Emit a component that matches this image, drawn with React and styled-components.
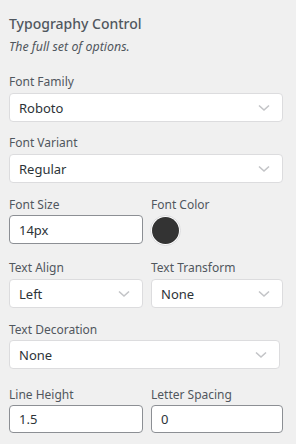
import React from 'react'
import styled, { createGlobalStyle } from 'styled-components'

const GlobalStyle = createGlobalStyle`
  html, body {
    margin: 0;
    padding: 0;
    background: #f0f0f0;
  }
  body {
    font-family: 'Noto Sans', 'Open Sans', sans-serif;
    color: #3c434a;
  }
`

const Panel = styled.div`
  width: 296px;
  height: 444px;
  box-sizing: border-box;
  padding: 13px 13px 0 9px;
  display: flex;
  flex-direction: column;
`

const Title = styled.h2`
  margin: 0;
  font-size: 14px;
  line-height: 21px;
  font-weight: 500;
  color: #50575e;
`

const Description = styled.p`
  margin: 4px 0 18px;
  font-size: 12.4px;
  line-height: 18px;
  font-style: italic;
  color: #50575e;
`

const Row = styled.div`
  display: grid;
  grid-template-columns: ${p => (p.split ? '134px 132px' : '1fr')};
  column-gap: 8px;
  margin-bottom: ${p => p.gap || 13}px;
`

const Field = styled.div`
  display: flex;
  flex-direction: column;
  min-width: 0;
`

const Label = styled.label`
  font-size: 12px;
  line-height: 16px;
  color: #50575e;
  margin-bottom: ${p => p.tight ? 2 : 3}px;
`

const SelectBox = styled.div`
  box-sizing: border-box;
  height: 29px;
  width: ${p => p.width ? `${p.width}px` : '100%'};
  background: #fff;
  border: 1px solid #dcdcde;
  border-radius: 4px;
  display: flex;
  align-items: center;
  justify-content: space-between;
  padding: 0 12px 0 9px;
  font-size: 13px;
  color: #2c3338;
`

const Input = styled.div`
  box-sizing: border-box;
  height: ${p => p.h || 29}px;
  background: #fff;
  border: 1px solid #8c8f94;
  border-radius: 4px;
  display: flex;
  align-items: center;
  padding: 0 9px;
  font-size: 13px;
  color: #2c3338;
`

const Swatch = styled.div`
  box-sizing: border-box;
  width: 31px;
  height: 31px;
  margin-left: -1px;
  border-radius: 50%;
  border: 1px solid #dcdcde;
  background: #fff;
  display: flex;
  align-items: center;
  justify-content: center;
  &::after {
    content: '';
    width: 27px;
    height: 27px;
    border-radius: 50%;
    background: ${p => p.color};
  }
`

const Chevron = () => (
  <svg width="12" height="8" viewBox="0 0 12 8" fill="none">
    <path d="M1 1.5 L6 6 L11 1.5" stroke="#c3c4c7" strokeWidth="1.6" />
  </svg>
)

const Select = ({ value, width }) => (
  <SelectBox width={width}>
    <span>{value}</span>
    <Chevron />
  </SelectBox>
)

const App = () => (
  <>
    <GlobalStyle />
    <Panel>
      <Title>Typography Control</Title>
      <Description>The full set of options.</Description>

      <Row>
        <Field>
          <Label>Font Family</Label>
          <Select value="Roboto" />
        </Field>
      </Row>

      <Row gap={14}>
        <Field>
          <Label>Font Variant</Label>
          <Select value="Regular" />
        </Field>
      </Row>

      <Row split gap={14}>
        <Field>
          <Label tight>Font Size</Label>
          <Input>14px</Input>
        </Field>
        <Field>
          <Label tight>Font Color</Label>
          <Swatch color="#333333" />
        </Field>
      </Row>

      <Row split gap={14}>
        <Field>
          <Label>Text Align</Label>
          <Select value="Left" />
        </Field>
        <Field>
          <Label>Text Transform</Label>
          <Select value="None" />
        </Field>
      </Row>

      <Row gap={18}>
        <Field>
          <Label tight>Text Decoration</Label>
          <Select value="None" width={271} />
        </Field>
      </Row>

      <Row split>
        <Field>
          <Label tight>Line Height</Label>
          <Input h={28}>1.5</Input>
        </Field>
        <Field>
          <Label tight>Letter Spacing</Label>
          <Input h={28}>0</Input>
        </Field>
      </Row>
    </Panel>
  </>
)

export default App
